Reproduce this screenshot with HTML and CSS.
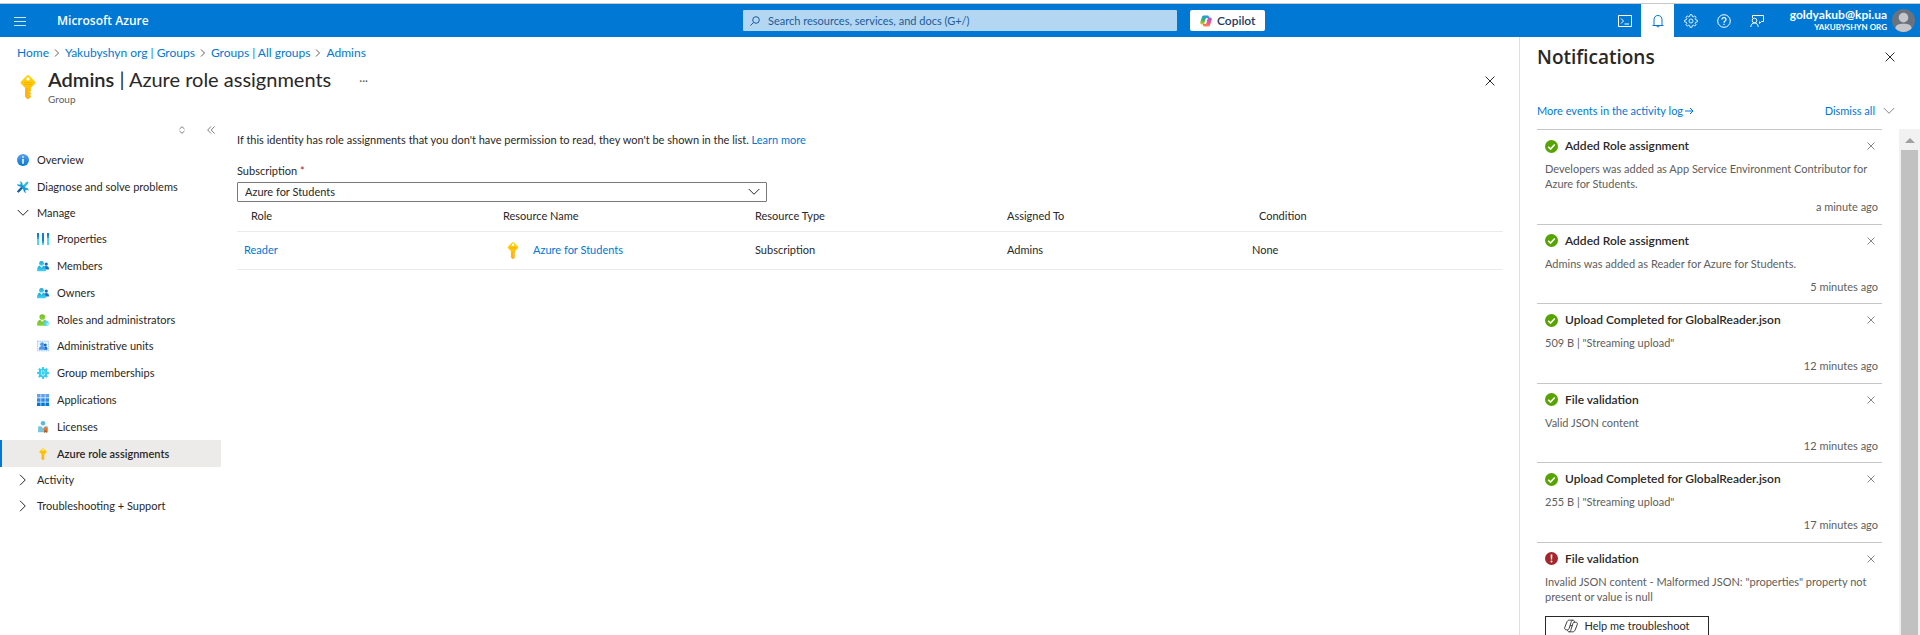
FILE: index.html
```html
<!DOCTYPE html>
<html lang="en">
<head>
<meta charset="utf-8">
<title>Admins | Azure role assignments - Microsoft Azure</title>
<link rel="stylesheet" href="styles.css">
</head>
<body>
<svg class="defs" aria-hidden="true">
  <defs>
    <linearGradient id="gKey" x1="0" y1="0" x2="0" y2="1"><stop offset="0" stop-color="#ffd400"/><stop offset="1" stop-color="#feb31b"/></linearGradient>
    <linearGradient id="gBlue" x1="0" y1="0" x2="0" y2="1"><stop offset="0" stop-color="#5ea0ef"/><stop offset="1" stop-color="#0078d4"/></linearGradient>
    <linearGradient id="gCyan" x1="0" y1="0" x2="0" y2="1"><stop offset="0" stop-color="#22a5cb"/><stop offset="1" stop-color="#3bd5ff"/></linearGradient>
    <linearGradient id="gTool" x1="0" y1="1" x2="1" y2="0"><stop offset="0" stop-color="#0078d4"/><stop offset="1" stop-color="#32bedd"/></linearGradient>
    <linearGradient id="gGreen" x1="0" y1="0" x2="0" y2="1"><stop offset="0" stop-color="#76bc2d"/><stop offset="1" stop-color="#86d633"/></linearGradient>
    <linearGradient id="gCopA" x1="0" y1="0" x2="0" y2="1"><stop offset="0" stop-color="#1f9cf0"/><stop offset=".5" stop-color="#35b36a"/><stop offset="1" stop-color="#f3c515"/></linearGradient>
    <linearGradient id="gCopB" x1="0" y1="0" x2="0" y2="1"><stop offset="0" stop-color="#a855e8"/><stop offset=".6" stop-color="#f0568c"/><stop offset="1" stop-color="#fb8a4c"/></linearGradient>
    <symbol id="key" viewBox="0 0 16 24"><path fill="url(#gKey)" fill-rule="evenodd" d="M6.600.8a2 2 0 0 1 2.800 0l5.300 5.400a2 2 0 0 1 0 2.800L11 12.700v3l-1.200 1.100L11 18v1l-1 1 1 1v.8L8.600 24H7.200L5 21.800v-9.100L1.300 9a2 2 0 0 1 0-2.800zM8 2.200a1.700 1.700 0 1 0 0 3.400 1.700 1.700 0 0 0 0-3.400z"/><path fill="#ff9300" d="M4 7h8v1H4zM4 9h8v1H4zM6.300 13h1v8.500l-1-1z" opacity=".45"/></symbol>
    <symbol id="people" viewBox="0 0 16 16"><circle cx="12.300" cy="5.400" r="2.200" fill="#0f6fcb"/><path fill="#0f6fcb" d="M9 12.500c0-3 1-4.500 3.300-4.500S16 9.500 16 12c0 .5-.3.800-.8.800H9z"/><circle cx="6" cy="4.600" r="3.200" fill="url(#gCyan)"/><path fill="url(#gCyan)" d="M0 14c.3-4 1.600-6.200 3.800-6.200L6 10.200l2.200-2.400c2.200 0 3.500 2.200 3.800 6.200 0 .6-.4 1-1 1H1c-.6 0-1-.4-1-1z"/></symbol>
    <symbol id="x" viewBox="0 0 16 16"><path d="M1 1l14 14M15 1L1 15" fill="none" stroke="currentColor" vector-effect="non-scaling-stroke"/></symbol>
    <symbol id="down" viewBox="0 0 16 16"><path d="M1 4l7 7 7-7" fill="none" stroke="currentColor" vector-effect="non-scaling-stroke"/></symbol>
    <symbol id="right" viewBox="0 0 16 16"><path d="M4 1l7 7-7 7" fill="none" stroke="currentColor" vector-effect="non-scaling-stroke"/></symbol>
    <symbol id="ok" viewBox="0 0 16 16"><circle cx="8" cy="8" r="8" fill="#57a300"/><path d="M4 8.300l2.800 2.800L12 5.500" fill="none" stroke="#fff" stroke-width="2"/></symbol>
    <symbol id="err" viewBox="0 0 16 16"><circle cx="8" cy="8" r="8" fill="#a4262c"/><path d="M6.900 3h2.200l-.3 6.300H7.200z" fill="#fff"/><circle cx="8" cy="11.800" r="1.200" fill="#fff"/></symbol>
  </defs>
</svg>

<header class="topbar">
  <div class="brand">
    <button class="icon-btn menu" aria-label="Show portal menu"><svg class="i12" viewBox="0 0 12 12"><path d="M0 2.500h12M0 6.500h12M0 10.500h12" stroke="#fff" fill="none" opacity=".8"/></svg></button>
    <a class="brand-name" href="#">Microsoft Azure</a>
  </div>
  <label class="search">
    <svg class="i10" viewBox="0 0 10 10" aria-hidden="true"><circle cx="6" cy="4" r="3.300" fill="none" stroke="#1b5c99"/><path d="M3.600 6.400L.4 9.600" stroke="#1b5c99"/></svg>
    <input type="text" aria-label="Search resources, services, and docs" placeholder="Search resources, services, and docs (G+/)">
  </label>
  <button class="copilot">
    <svg class="i12" viewBox="0 0 24 24" aria-hidden="true"><path fill="url(#gCopA)" d="M8 1h7c2 0 2.600 1 3 3l.5 2H14c-2 0-2.600 1-3 3l-2 7c-.5 2-1.500 3-3.500 3H4c-3 0-4-2-3.300-5L4 4c.8-2 2-3 4-3z"/><path fill="url(#gCopB)" d="M16 23H9c-2 0-2.600-1-3-3l-.5-2H10c2 0 2.600-1 3-3l2-7c.5-2 1.500-3 3.500-3H20c3 0 4 2 3.300 5L20 20c-.8 2-2 3-4 3z"/><path fill="#fff" d="M11.500 8.500h3l-2 7h-3z"/></svg>
    Copilot
  </button>
  <nav class="tools" aria-label="Portal tools">
    <button class="tool" aria-label="Cloud Shell"><svg class="i14" viewBox="0 0 14 14"><path d="M.5 1.500h13v11H.5zM3 4.500L5.500 7 3 9.500M6.500 10H11" fill="none" stroke="currentColor"/></svg></button>
    <button class="tool active" aria-label="Notifications"><svg class="i14" viewBox="0 0 14 14"><path d="M1.500 11.500h11M3 11V6c0-3 1.600-4.500 4-4.500S11 3 11 6v5M5.700 12c.2 1.300 2.400 1.300 2.600 0" fill="none" stroke="currentColor"/></svg></button>
    <button class="tool" aria-label="Settings"><svg class="i14" viewBox="0 0 16 16"><circle cx="8" cy="8" r="2.300" fill="none" stroke="currentColor"/><path d="M6.900.8h2.200l.4 2 1.100.5 1.700-1.100 1.500 1.500-1.100 1.700.5 1.100 2 .4v2.200l-2 .4-.5 1.100 1.100 1.700-1.500 1.500-1.700-1.100-1.100.5-.4 2H6.900l-.4-2-1.100-.5-1.700 1.100-1.500-1.500 1.100-1.700-.5-1.100-2-.4V6.900l2-.4.500-1.100L2.200 3.700l1.500-1.500 1.700 1.100 1.100-.5z" fill="none" stroke="currentColor"/></svg></button>
    <button class="tool" aria-label="Help"><svg class="i14" viewBox="0 0 14 14"><circle cx="7" cy="7" r="6.300" fill="none" stroke="currentColor"/><path d="M5 5.500c0-2.600 4-2.600 4 0C9 7 7 7 7 8.700M7 9.700v1.400" fill="none" stroke="currentColor" stroke-width="1.200"/></svg></button>
    <button class="tool" aria-label="Feedback"><svg class="i14" viewBox="0 0 14 14"><path d="M2.500 4V1.500h11v6h-2l-2 2v-2M.8 13c0-2.700 1.700-4 3.700-4s3.700 1.300 3.700 4" fill="none" stroke="currentColor"/><circle cx="4.500" cy="6.500" r="2.300" fill="none" stroke="currentColor"/></svg></button>
  </nav>
  <button class="account">
    <span class="who"><span class="mail">goldyakub@kpi.ua</span><span class="org">YAKUBYSHYN ORG</span></span>
    <svg class="avatar" viewBox="0 0 24 24" aria-hidden="true"><circle cx="12" cy="12" r="12" fill="#69727d"/><circle cx="12" cy="9" r="5" fill="#c4c6c9"/><path d="M3.500 20.400C3.500 16.500 7 15.300 12 15.300s8.500 1.200 8.500 5.100A12 12 0 0 1 12 24a12 12 0 0 1-8.500-3.600z" fill="#c4c6c9"/></svg>
  </button>
</header>

<div class="shell">
  <main class="blade">
    <nav class="crumbs" aria-label="Breadcrumb">
      <a href="#">Home</a><svg class="i8"><use href="#right"/></svg>
      <a href="#">Yakubyshyn org | Groups</a><svg class="i8"><use href="#right"/></svg>
      <a href="#">Groups | All groups</a><svg class="i8"><use href="#right"/></svg>
      <a href="#">Admins</a>
    </nav>
    <div class="heading">
      <svg class="key-lg" aria-hidden="true"><use href="#key"/></svg>
      <div class="titles">
        <h1><b>Admins</b> | Azure role assignments</h1>
        <p>Group</p>
      </div>
      <button class="icon-btn more" aria-label="More">···</button>
      <button class="icon-btn close" aria-label="Close"><svg class="i10"><use href="#x"/></svg></button>
    </div>
    <div class="body">
      <nav class="side" aria-label="Resource menu">
        <div class="side-tools">
          <button class="icon-btn" aria-label="Expand all"><svg class="i8" viewBox="0 0 8 8"><path d="M1.500 3L4 .7 6.500 3M1.500 5L4 7.300 6.500 5" fill="none" stroke="#605e5c" stroke-width=".8"/></svg></button>
          <button class="icon-btn" aria-label="Collapse menu"><svg class="i8" viewBox="0 0 8 8"><path d="M4 .5L.7 4 4 7.500M7.500 .5L4.200 4l3.300 3.500" fill="none" stroke="#605e5c" stroke-width=".8"/></svg></button>
        </div>
        <a class="item" href="#"><svg class="i12" viewBox="0 0 16 16"><circle cx="8" cy="8" r="8" fill="url(#gBlue)"/><path d="M7 6.500h2V13H7zM7 3h2v2H7z" fill="#fff"/></svg>Overview</a>
        <a class="item" href="#"><svg class="i12" viewBox="0 0 16 16"><path d="M13.500 1.500l1 1-5 6-1.500-1.300zM2 14.800l5-6" stroke="#32bedd" stroke-width="1.500" fill="#32bedd"/><path d="M1 14.800l6-6.500" stroke="#0f5fa8" stroke-width="2.800"/><path d="M.5 3.500L2.500 5l2-.5.500-2L3.500.6c2.500-.4 4.300 1.500 3.800 4l4.200 4.500c2.300-.4 4.200 1.400 3.900 3.900L13.500 11.500l-2 .5-.500 2 1.500 1.500c-2.500.3-4.200-1.500-3.800-3.900L4.500 7.200C2.200 7.600.2 6 .5 3.500z" fill="url(#gTool)"/></svg>Diagnose and solve problems</a>
        <button class="item group" aria-expanded="true"><svg class="i12"><use href="#down"/></svg>Manage</button>
        <div class="sub">
          <a class="item" href="#"><svg class="i12" viewBox="0 0 12 12"><path d="M0 0h2v4H0zM5 0h2v8H5zM10 0h2v3h-2z" fill="#0f7fd6"/><path d="M0 6h2v6H0zM5 10h2v2H5zM10 5h2v7h-2z" fill="#50d5f5"/><path d="M0 4h2v2H0zM5 8h2v2H5zM10 3h2v2h-2z" fill="#2b9fdc"/></svg>Properties</a>
          <a class="item" href="#"><svg class="i12"><use href="#people"/></svg>Members</a>
          <a class="item" href="#"><svg class="i12"><use href="#people"/></svg>Owners</a>
          <a class="item" href="#"><svg class="i12" viewBox="0 0 16 16"><circle cx="7" cy="4" r="3.800" fill="url(#gGreen)"/><path d="M0 14.500C.3 10.300 1.700 8 4.300 8L7 10.600 9.700 8c2.600 0 4 2.300 4.300 6.500 0 .6-.4 1-1 1H1c-.6 0-1-.4-1-1z" fill="url(#gGreen)"/><path d="M12.500 8.500l3.500 2v4L12.500 16 9 14.500v-4z" fill="#50d5f5"/><path d="M12.500 12.200l3.500-1.700v4L12.500 16z" fill="#9cebff"/></svg>Roles and administrators</a>
          <a class="item" href="#"><svg class="i12" viewBox="0 0 16 16"><path d="M.5 1.500h15v13H.5z" fill="#eaf4ff" stroke="#83b9f9" stroke-dasharray="2 1"/><circle cx="11" cy="6.500" r="2" fill="#1268c4"/><path d="M9 13c0-2.700.7-4.500 2.500-4.500S14 10.300 14 13z" fill="#1268c4"/><circle cx="6.800" cy="5.500" r="2.500" fill="#4a98ec"/><path d="M2.500 13c0-3 1.300-5 4.300-5s4.300 2 4.300 5z" fill="#4a98ec"/></svg>Administrative units</a>
          <a class="item" href="#"><svg class="i12" viewBox="0 0 16 16"><path d="M6.900 0h2.200l.4 2.200 1.300.5 1.900-1.300 1.700 1.700-1.300 1.900.5 1.300 2.400.6v2.200l-2.400.4-.5 1.300 1.300 1.900-1.700 1.700-1.900-1.300-1.300.5L9.100 16H6.900l-.4-2.400-1.300-.5-1.900 1.300-1.700-1.700 1.300-1.900-.5-1.300L0 9.100V6.900l2.400-.6.500-1.300-1.300-1.900 1.700-1.700 1.900 1.300 1.300-.5z" fill="#32cdf0"/><path d="M6 4.500v4.300a2.200 2.200 0 0 0 4.400 0M8.300 4.200v2M10.500 6v1.500" fill="none" stroke="#d8f7ff" stroke-width="1.300"/></svg>Group memberships</a>
          <a class="item" href="#"><svg class="i12" viewBox="0 0 12 12"><path d="M0 0h3.600v3.600H0zM4.200 0h3.600v3.600H4.200zM8.400 0H12v3.600H8.400z" fill="#5ea0ef"/><path d="M0 4.200h3.600v3.600H0zM4.200 4.200h3.600v3.600H4.200zM8.400 4.200H12v3.600H8.400z" fill="#2f8ce2"/><path d="M0 8.400h3.600V12H0zM4.200 8.400h3.600V12H4.200zM8.400 8.400H12V12H8.400z" fill="#0078d4"/></svg>Applications</a>
          <a class="item" href="#"><svg class="i12" viewBox="0 0 16 16"><circle cx="8" cy="3" r="3" fill="#5db9d6"/><path d="M1.500 15V8.500c0-1 .5-1.500 1.500-1.500h2.500L8 9.500 10.500 7H13c1 0 1.500.5 1.500 1.500V15z" fill="#76c4de"/><path d="M9.500 11h4v5l-2-1.200-2 1.200z" fill="#b5541c"/><circle cx="11.500" cy="10.500" r="2.500" fill="#e8762d"/></svg>Licenses</a>
          <a class="item selected" href="#" aria-current="page"><svg class="i12"><use href="#key"/></svg>Azure role assignments</a>
        </div>
        <button class="item group" aria-expanded="false"><svg class="i12"><use href="#right"/></svg>Activity</button>
        <button class="item group" aria-expanded="false"><svg class="i12"><use href="#right"/></svg>Troubleshooting + Support</button>
      </nav>
      <section class="content">
        <p class="info">If this identity has role assignments that you don't have permission to read, they won't be shown in the list. <a href="#">Learn more</a></p>
        <label class="field-label" for="sub">Subscription <span class="req">*</span></label>
        <div class="select-wrap">
          <select id="sub"><option>Azure for Students</option></select>
          <svg class="i12 caret" aria-hidden="true"><use href="#down"/></svg>
        </div>
        <table>
          <thead><tr><th>Role</th><th>Resource Name</th><th>Resource Type</th><th>Assigned To</th><th class="last">Condition</th></tr></thead>
          <tbody><tr><td class="tight"><a href="#">Reader</a></td><td><span class="res"><svg class="key-md" aria-hidden="true"><use href="#key"/></svg><a href="#">Azure for Students</a></span></td><td>Subscription</td><td>Admins</td><td class="tight">None</td></tr></tbody>
        </table>
      </section>
    </div>
  </main>

  <aside class="panel">
    <div class="panel-head"><h2>Notifications</h2><button class="icon-btn" aria-label="Close notifications"><svg class="i10"><use href="#x"/></svg></button></div>
    <div class="panel-links">
      <a href="#">More events in the activity log<svg class="arrow" viewBox="0 0 9 8"><path d="M0 4h8M5 1l3 3-3 3" fill="none" stroke="currentColor"/></svg></a>
      <span class="dismiss"><a href="#">Dismiss all</a><button class="icon-btn muted" aria-label="Dismiss options"><svg class="i12"><use href="#down"/></svg></button></span>
    </div>
    <div class="panel-body">
      <ul class="notices">
        <li><div class="n-head"><svg class="status"><use href="#ok"/></svg><h3>Added Role assignment</h3><button class="icon-btn muted" aria-label="Dismiss"><svg class="i8"><use href="#x"/></svg></button></div><p>Developers was added as App Service Environment Contributor for Azure for Students.</p><time>a minute ago</time></li>
        <li><div class="n-head"><svg class="status"><use href="#ok"/></svg><h3>Added Role assignment</h3><button class="icon-btn muted" aria-label="Dismiss"><svg class="i8"><use href="#x"/></svg></button></div><p>Admins was added as Reader for Azure for Students.</p><time>5 minutes ago</time></li>
        <li><div class="n-head"><svg class="status"><use href="#ok"/></svg><h3>Upload Completed for GlobalReader.json</h3><button class="icon-btn muted" aria-label="Dismiss"><svg class="i8"><use href="#x"/></svg></button></div><p>509 B | "Streaming upload"</p><time>12 minutes ago</time></li>
        <li><div class="n-head"><svg class="status"><use href="#ok"/></svg><h3>File validation</h3><button class="icon-btn muted" aria-label="Dismiss"><svg class="i8"><use href="#x"/></svg></button></div><p>Valid JSON content</p><time>12 minutes ago</time></li>
        <li><div class="n-head"><svg class="status"><use href="#ok"/></svg><h3>Upload Completed for GlobalReader.json</h3><button class="icon-btn muted" aria-label="Dismiss"><svg class="i8"><use href="#x"/></svg></button></div><p>255 B | "Streaming upload"</p><time>17 minutes ago</time></li>
        <li><div class="n-head"><svg class="status"><use href="#err"/></svg><h3>File validation</h3><button class="icon-btn muted" aria-label="Dismiss"><svg class="i8"><use href="#x"/></svg></button></div><p>Invalid JSON content - Malformed JSON: "properties" property not present or value is null</p>
          <button class="help"><svg class="i14" viewBox="0 0 24 24" aria-hidden="true"><path d="M9 2h6c2 0 2.500 1 3 3l.3 1.500M9 2C7 2 6 3 5 5L1.500 14c-1 3 0 4.500 2.500 4.500h2c1.500 0 2.500-1 3-3L12 6c.5-2 1.300-4 3-4M15 22H9c-2 0-2.500-1-3-3M15 22c2 0 3-1 4-3l3.500-9c1-3 0-4.500-2.500-4.500h-2c-1.500 0-2.500 1-3 3L12 18c-.5 2-1.300 4-3 4M10.500 11.500h4" fill="none" stroke="currentColor" stroke-width="1.500"/></svg>Help me troubleshoot</button></li>
      </ul>
      <div class="scroll" aria-hidden="true"><span class="up"></span><span class="thumb"></span></div>
    </div>
  </aside>
</div>
</body>
</html>
```
FILE: styles.css
```css
* { box-sizing: border-box; }
body { margin: 0; height: 100vh; overflow: hidden; display: flex; flex-direction: column; background: #fff; color: #292827; font: 11px/16px Lato, "Noto Sans", sans-serif; }
h1, h2, h3, p, ul { margin: 0; padding: 0; font-weight: 400; }
button, input, select { font: inherit; color: inherit; border: 0; background: none; padding: 0; margin: 0; }
a { color: #0078d4; text-decoration: none; }
svg { flex: none; display: block; }
.defs { position: absolute; width: 0; height: 0; }
.i8 { width: 8px; height: 8px; }
.i10 { width: 10px; height: 10px; }
.i12 { width: 12px; height: 12px; }
.i14 { width: 14px; height: 14px; }
.icon-btn { display: flex; align-items: center; justify-content: center; }
.muted { color: #8a8886; }

.topbar { flex: none; display: flex; align-items: center; height: 34px; margin-top: 3px; border-top: 1px solid #c8c8c8; background: #0078d4; color: #fff; }
.brand { flex: 0 1 743px; min-width: 0; display: flex; align-items: center; padding-left: 14px; gap: 31px; }
.brand-name { color: #fff; font-family: "Open Sans", sans-serif; font-size: 12px; font-weight: 600; }
.search { flex: 0 1 434px; height: 21px; display: flex; align-items: center; gap: 8px; padding: 0 7px; border-radius: 1px; background: #b3d6f2; }
.search input { flex: 1; min-width: 0; outline: 0; }
.search input::placeholder { color: #1b5c99; opacity: 1; }
.copilot { display: flex; align-items: center; gap: 5px; height: 21px; margin-left: 13px; padding: 0 10px; border-radius: 2px; background: #fff; color: #243a5e; font-size: 12px; font-weight: 600; }
.tools { display: flex; align-self: stretch; margin-left: auto; }
.tool { width: 33px; display: flex; align-items: center; justify-content: center; color: #fff; }
.tool.active { background: #fff; color: #0078d4; }
.account { width: 147px; display: flex; align-items: center; justify-content: flex-end; gap: 5px; padding-right: 5px; text-align: right; }
.who { display: flex; flex-direction: column; }
.mail { font-size: 12px; line-height: 14px; font-weight: 700; }
.org { font-size: 8px; line-height: 11px; font-weight: 700; }
.avatar { width: 23px; height: 23px; }

.shell { flex: 1; min-height: 0; display: flex; }
.blade { flex: 1; min-width: 0; display: flex; flex-direction: column; }
.crumbs { display: flex; align-items: center; gap: 4px; padding: 8px 17px 0; color: #605e5c; font-size: 12px; }
.heading { display: flex; padding: 0 24px 0 20px; }
.key-lg { width: 16px; height: 24px; margin-top: 14px; }
.titles { margin-left: 12px; padding-top: 4px; }
h1 { font-size: 20px; line-height: 28px; }
h1 b { font-weight: 600; }
.titles p { font-size: 10px; line-height: 12px; color: #605e5c; }
.more { margin: 0 auto 0 28px; height: 40px; color: #605e5c; }
.close { height: 40px; }
.body { flex: 1; display: flex; }
.side { width: 221px; flex: none; }
.side-tools { display: flex; justify-content: flex-end; gap: 21px; padding: 21px 6px 12px; }
.item { width: 100%; min-height: 27px; display: flex; align-items: center; gap: 8px; padding-left: 17px; color: #292827; text-align: left; }
.group { min-height: 26px; }
.sub { display: grid; grid-auto-rows: 1fr; min-height: 241px; }
.sub .item { min-height: 26px; padding-left: 37px; }
.sub .item.selected { background: #edebe9; border-left: 2px solid #0078d4; padding-left: 35px; font-weight: 600; }
.content { flex: 1; min-width: 0; padding: 27px 16px 0; }
.field-label { display: block; margin-top: 15px; }
.req { color: #a4262c; }
.select-wrap { display: grid; align-items: center; width: 530px; max-width: 100%; margin-top: 3px; }
.select-wrap > * { grid-area: 1 / 1; }
select { appearance: none; width: 100%; height: 20px; padding: 0 7px; border: 1px solid #7a7876; border-radius: 1px; background: #fff; }
.caret { justify-self: end; margin-right: 7px; pointer-events: none; }
table { width: 100%; table-layout: fixed; border-collapse: collapse; }
th, td { padding: 0 0 0 14px; text-align: left; font-weight: 400; border-bottom: 1px solid #edebe9; }
th { height: 29px; width: 252px; }
th.last { width: auto; }
td { height: 38px; }
td.tight { padding-left: 7px; }
.res { display: flex; align-items: center; gap: 14px; padding-left: 4px; }
.key-md { width: 12px; height: 17px; }

.panel { width: 401px; flex: none; display: flex; flex-direction: column; border-left: 1px solid #e1dfdd; }
.panel-head { display: flex; align-items: center; justify-content: space-between; padding: 6px 25px 0 17px; }
h2 { font-family: "Open Sans", sans-serif; font-size: 19px; line-height: 28px; font-weight: 600; }
.panel-links { display: flex; justify-content: space-between; padding: 32px 25px 10px 17px; }
.panel-links a { display: flex; align-items: center; gap: 2px; }
.arrow { width: 9px; height: 8px; }
.dismiss { display: flex; gap: 8px; }
.panel-body { flex: 1; min-height: 0; display: flex; justify-content: space-between; padding-left: 17px; overflow: hidden; }
.notices { flex: 1; display: grid; align-self: flex-start; min-height: 507px; list-style: none; color: #605e5c; }
.notices li { display: flex; flex-direction: column; padding: 8px 4px 0 8px; border-top: 1px solid #c8c6c4; }
.n-head { display: flex; align-items: center; gap: 7px; padding-right: 3px; }
.n-head button { margin-left: auto; }
.status { width: 13px; height: 13px; }
h3 { font-size: 12px; line-height: 16px; font-weight: 600; color: #292827; }
.notices p { margin-top: 7px; line-height: 15px; padding-right: 10px; }
time { margin: 8px 0; text-align: right; }
.help { align-self: flex-start; display: flex; align-items: center; justify-content: center; gap: 6px; width: 164px; height: 20px; margin-top: 12px; border: 1px solid #292827; color: #292827; }
.scroll { flex: none; width: 21px; margin-left: 17px; display: flex; flex-direction: column; align-items: center; background: #f1f1f1; }
.up { margin: 9px 0 7px; border: 5px solid transparent; border-top: 0; border-bottom-color: #a0a0a0; }
.thumb { flex: 1; width: 17px; background: #c1c1c1; }
```
